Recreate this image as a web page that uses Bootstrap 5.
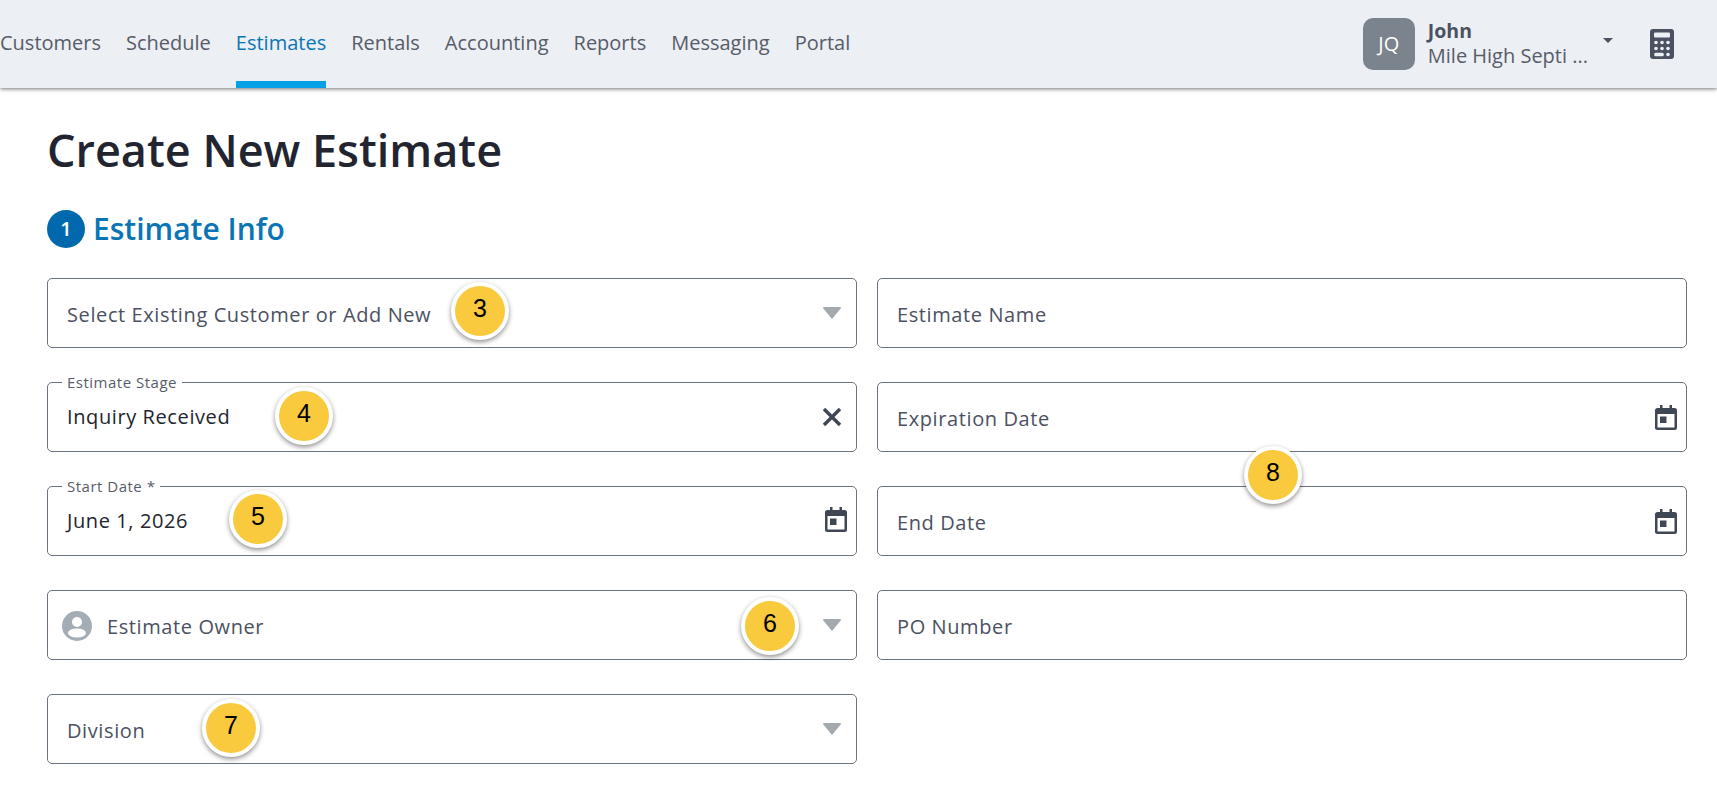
<!DOCTYPE html>
<html lang="en">

<head>
    <meta charset="UTF-8">
    <meta name="viewport" content="width=device-width, initial-scale=1.0">
    <title>Create New Estimate</title>
    <link href="https://cdn.jsdelivr.net/npm/bootstrap@5.3.2/dist/css/bootstrap.min.css" rel="stylesheet">
    <style>
        body {
            font-family: "Open Sans", sans-serif;
            background-color: #fff;
            color: #22252f;
            overflow: hidden;
        }

        .top-bar {
            height: 88px;
            background-color: #eceff4;
            box-shadow: 0 1px 4px rgba(0, 0, 0, .55);
            padding-right: 43px;
            position: relative;
        }

        .top-link {
            display: flex;
            align-items: center;
            height: 88px;
            padding-bottom: 3px;
            font-size: 20px;
            color: #575c69;
            text-decoration: none;
            margin-right: 25px;
        }

        .top-link.on {
            color: #0a75b5;
            box-shadow: inset 0 -7px 0 #05a0e6;
        }

        .user-tile {
            width: 52px;
            height: 52px;
            border-radius: 10px;
            background-color: #7b838c;
            color: #fff;
            font-size: 20px;
            margin-right: 13px;
        }

        .user-name {
            font-size: 19.500px;
            font-weight: 700;
            line-height: 24px;
            color: #4b5161;
        }

        .user-org {
            font-size: 20px;
            line-height: 26px;
            color: #575c69;
        }

        .user-caret {
            width: 0;
            height: 0;
            border-left: 5px solid transparent;
            border-right: 5px solid transparent;
            border-top: 5px solid #4b5161;
            margin: 0 37px 8px 15px;
        }

        .page-wrap {
            position: relative;
            padding: 32px 30px 0 47px;
        }

        .page-title {
            font-size: 45px;
            font-weight: 600;
            line-height: 60px;
            margin: 0;
            color: #22252f;
        }

        .step-num {
            width: 38px;
            height: 38px;
            border-radius: 50%;
            background-color: #0069ad;
            color: #fff;
            font-size: 20px;
            font-weight: 600;
        }

        .step-title {
            font-size: 30px;
            font-weight: 600;
            color: #0a75b5;
            margin: 0 0 0 8px;
            line-height: 38px;
        }

        .step-head {
            margin-top: 30px;
            margin-bottom: 30px;
        }

        .form-area {
            display: grid;
            grid-template-columns: 810px 810px;
            column-gap: 20px;
            row-gap: 34px;
        }

        .fld {
            position: relative;
            height: 70px;
            border: 1px solid #6b7280;
            border-radius: 5px;
            padding: 3px 14px 0 19px;
            font-size: 20px;
            letter-spacing: .6px;
            color: #4b5161;
        }

        .fld.filled {
            color: #22252f;
            padding-top: 0;
        }

        .fld-legend {
            position: absolute;
            top: -9px;
            left: 14px;
            padding: 0 5px;
            background-color: #fff;
            font-size: 15px;
            line-height: 17px;
            letter-spacing: .5px;
            color: #575c69;
        }

        .drop-arrow {
            width: 0;
            height: 0;
            border-left: 10px solid transparent;
            border-right: 10px solid transparent;
            border-top: 12px solid #a4a9ae;
            border-radius: 3px;
            margin-bottom: 3px;
        }

        .date-icon {
            margin: 0 -5px 3px 0;
        }

        .owner-icon {
            margin: 0 15px 2px -5px;
        }

        .pin {
            position: absolute;
            width: 58px;
            height: 58px;
            margin: -29px 0 0 -29px;
            border-radius: 50%;
            border: 4px solid #fff;
            background-color: #f9c93e;
            box-shadow: 0 2px 5px rgba(0, 0, 0, .45);
            color: #000;
            font-family: "Liberation Sans", sans-serif;
            font-size: 25px;
            padding-bottom: 4px;
        }
    </style>
</head>

<body>
    <nav class="top-bar d-flex align-items-center">
        <div class="d-flex flex-grow-1">
            <a class="top-link" href="#">Customers</a>
            <a class="top-link" href="#">Schedule</a>
            <a class="top-link on" href="#">Estimates</a>
            <a class="top-link" href="#">Rentals</a>
            <a class="top-link" href="#">Accounting</a>
            <a class="top-link" href="#">Reports</a>
            <a class="top-link" href="#">Messaging</a>
            <a class="top-link" href="#">Portal</a>
        </div>
        <div class="user-tile d-flex align-items-center justify-content-center">JQ</div>
        <div>
            <div class="user-name">John</div>
            <div class="user-org">Mile High Septi ...</div>
        </div>
        <div class="user-caret"></div>
        <svg width="24" height="30" viewBox="0 0 24 30">
            <path fill="#4b5161" d="M3 0h18a3 3 0 0 1 3 3v24a3 3 0 0 1-3 3H3a3 3 0 0 1-3-3V3a3 3 0 0 1 3-3z"/>
            <rect x="4" y="3.500" width="16" height="5" rx="1" fill="#eceff4"/>
            <g fill="#eceff4">
                <circle cx="6" cy="13.500" r="1.800"/>
                <circle cx="12" cy="13.500" r="1.800"/>
                <circle cx="18" cy="13.500" r="1.800"/>
                <circle cx="6" cy="19.500" r="1.800"/>
                <circle cx="12" cy="19.500" r="1.800"/>
                <circle cx="18" cy="19.500" r="1.800"/>
                <rect x="4.200" y="23.700" width="9.600" height="3.600" rx="1.500"/>
                <circle cx="18" cy="25.500" r="1.800"/>
            </g>
        </svg>
    </nav>

    <main class="page-wrap">
        <h1 class="page-title">Create New Estimate</h1>
        <div class="step-head d-flex align-items-center">
            <div class="step-num d-flex align-items-center justify-content-center">1</div>
            <h2 class="step-title">Estimate Info</h2>
        </div>

        <div class="form-area">
            <div class="fld d-flex align-items-center justify-content-between">
                <span>Select Existing Customer or Add New</span>
                <span class="drop-arrow"></span>
            </div>
            <div class="fld d-flex align-items-center">
                <span>Estimate Name</span>
            </div>

            <div class="fld filled d-flex align-items-center justify-content-between">
                <span class="fld-legend">Estimate Stage</span>
                <span>Inquiry Received</span>
                <svg width="20" height="20" viewBox="0 0 20 20">
                    <path d="M2 2l16 16M18 2L2 18" stroke="#3f4654" stroke-width="3.400" fill="none"/>
                </svg>
            </div>
            <div class="fld d-flex align-items-center justify-content-between">
                <span>Expiration Date</span>
                <svg class="date-icon" width="22" height="25" viewBox="0 0 22 25">
                    <path fill="#3f4654" fill-rule="evenodd" d="M5 0h2.500v3h7V0H17v3h2.500A2.500 2.500 0 0 1 22 5.500v17a2.500 2.500 0 0 1-2.500 2.500h-17A2.500 2.500 0 0 1 0 22.500v-17A2.500 2.500 0 0 1 2.500 3H5zM2.500 9v13.500h17V9zM5 11.500h6.500V18H5z"/>
                </svg>
            </div>

            <div class="fld filled d-flex align-items-center justify-content-between">
                <span class="fld-legend">Start Date *</span>
                <span>June 1, 2026</span>
                <svg class="date-icon" width="22" height="25" viewBox="0 0 22 25">
                    <path fill="#3f4654" fill-rule="evenodd" d="M5 0h2.500v3h7V0H17v3h2.500A2.500 2.500 0 0 1 22 5.500v17a2.500 2.500 0 0 1-2.500 2.500h-17A2.500 2.500 0 0 1 0 22.500v-17A2.500 2.500 0 0 1 2.500 3H5zM2.500 9v13.500h17V9zM5 11.500h6.500V18H5z"/>
                </svg>
            </div>
            <div class="fld d-flex align-items-center justify-content-between">
                <span>End Date</span>
                <svg class="date-icon" width="22" height="25" viewBox="0 0 22 25">
                    <path fill="#3f4654" fill-rule="evenodd" d="M5 0h2.500v3h7V0H17v3h2.500A2.500 2.500 0 0 1 22 5.500v17a2.500 2.500 0 0 1-2.500 2.500h-17A2.500 2.500 0 0 1 0 22.500v-17A2.500 2.500 0 0 1 2.500 3H5zM2.500 9v13.500h17V9zM5 11.500h6.500V18H5z"/>
                </svg>
            </div>

            <div class="fld d-flex align-items-center">
                <svg class="owner-icon" width="30" height="30" viewBox="0 0 30 30">
                    <circle cx="15" cy="15" r="15" fill="#a4adb6"/>
                    <circle cx="15" cy="11" r="5" fill="#fff"/>
                    <ellipse cx="15" cy="22" rx="9" ry="4.500" fill="#fff"/>
                </svg>
                <span class="flex-grow-1">Estimate Owner</span>
                <span class="drop-arrow"></span>
            </div>
            <div class="fld d-flex align-items-center">
                <span>PO Number</span>
            </div>

            <div class="fld d-flex align-items-center justify-content-between">
                <span>Division</span>
                <span class="drop-arrow"></span>
            </div>
        </div>

        <div class="pin d-flex align-items-center justify-content-center" style="left: 480px; top: 223px;">3</div>
        <div class="pin d-flex align-items-center justify-content-center" style="left: 304px; top: 328px;">4</div>
        <div class="pin d-flex align-items-center justify-content-center" style="left: 258px; top: 431px;">5</div>
        <div class="pin d-flex align-items-center justify-content-center" style="left: 770px; top: 538px;">6</div>
        <div class="pin d-flex align-items-center justify-content-center" style="left: 231px; top: 640px;">7</div>
        <div class="pin d-flex align-items-center justify-content-center" style="left: 1273px; top: 387px;">8</div>
    </main>

    <script src="https://cdn.jsdelivr.net/npm/bootstrap@5.3.2/dist/js/bootstrap.bundle.min.js"></script>
</body>

</html>
